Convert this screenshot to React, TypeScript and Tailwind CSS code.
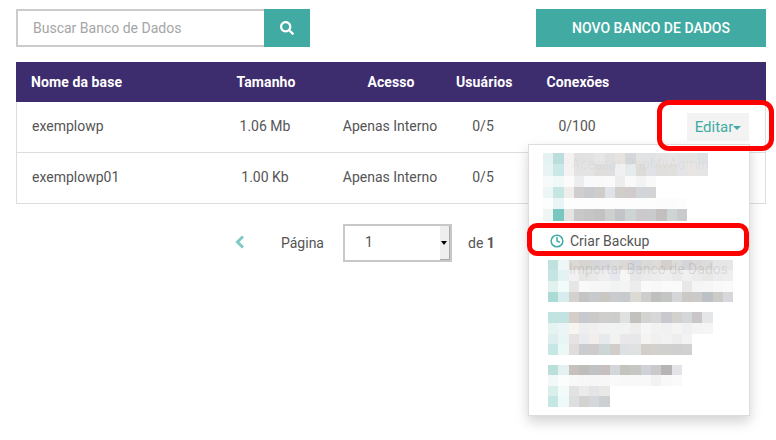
import { Clock } from "lucide-react";
import { FaSearch } from "react-icons/fa";

// the blurred menu entries of the screenshot, as rows of colour cells
const block1 = [
    ["#e4f2f1", "#b9dedb", "#f3f2f0", "#e1e1e1", "#e2e2e2", "#e6e6e6", "#e0e0e0", "#e6e3e1", "#d4d8da", "#e3e3e3", "#e0e2e4", "#e4e4e4", "#e6e4e4", "#e2e4e6", "#e4e4e2", "#dfe2e4"],
    ["#e8f4f4", "#cbe7e8", "#f4f3f1", "#e3e3e3", "#e3e3e3", "#dfdedc", "#dcdee0", "#f0f0f0", "#e6ebec", "#dedbd9", "#e0e2e5", "#e0dfdd", "#e2e0dd", "#e2e4e7", "#e8e5e2", "#e3e5e7"],
    ["#f7fafa", "#f0f8f8", "#fbfbf9", "#eceeee", "#f8f9fb", "#f9f9f9", "#fafafa", "#ededed", "#f9f9f9", "#f2f4f4", "#f9f9f9"],
    ["#eef6f5", "#c6e6e4", "#efeeec", "#d0cece", "#c9cad0", "#cfcdcb", "#dfe2e9", "#d1cecc", "#cfcccb", "#d2d5da", "#d4d4d6"],
    ["#fcfdfd", "#e8f4f5", "#fdfdfd", "#fdfdfd", "#fdfdfd", "#fdfdfd", "#fdfdfd", "#fdfdfd", "#fdfdfd", "#fdfdfd", "#fdfdfd", "#fcfcfc", "#fcfcfc", "#fdfdfd"],
    ["#eef5f3", "#78c7c1", "#e4e4e2", "#c8c8c8", "#c5c5c5", "#c2c2c2", "#ccd0ce", "#c2c4c8", "#ced4d4", "#cbc9c9", "#c9cbcd", "#c4bfbf", "#ced4d4", "#c8cacb"]
];

const block2 = [
    ["#bfe2de", "#eef6f6", "#ddd9d5", "#d8d4d0", "#d6d6d6", "#d9d9dd", "#dcdcdc", "#dcd9d7", "#d3d5dc", "#dadad8", "#dedcd9", "#d6d0cc", "#dcdcda", "#d3d5da", "#dcd8d8", "#dcdcdc", "#e6e6e6", "#e6e6e6"],
    ["#c5e5e2", "#e3f3f4", "#f1f1f1", "#e6e6e4", "#e8eaea", "#eeeeee", "#e6e8ee", "#f6f6f4", "#e6e6e8", "#eaeaea", "#ececec", "#eeeeee", "#eaeaea", "#f0f0f0", "#ebebeb", "#e8e8e6", "#ececf0", "#eeeeee"],
    ["#e1f1ee", "#f3fafa", "#e6e6e6", "#f9f9f9", "#f7f7f7", "#f6f6f6", "#f2f4f4", "#f4f4f4", "#ececec", "#fafafa", "#f8f8f8", "#fafafa", "#fafafa", "#e8e8e8", "#f5f5f5", "#f6f6f6", "#f9f9f9", "#fafafa"],
    ["#acdad5", "#d6ecee", "#d4d0ce", "#c6c4c2", "#c6cacc", "#cac6c2", "#c8ccce", "#c6cacd", "#dcd9d5", "#cdcdcb", "#bfbfbf", "#c4c6c4", "#d4d6da", "#ccc8c6", "#cccac8", "#bcc1c5", "#cdcbc8", "#d6d8dc"]
];

const block3 = [
    ["#c0e4e0", "#c2e3df", "#d6cdc9", "#c6cace", "#ccc9c9", "#cececc", "#cdcecc", "#dfe1e0", "#c2c1bd", "#d3d3d1", "#d8d6d6", "#c8c8ce", "#d3d1cd", "#d3d7da", "#c8c6c6", "#e4e6e8"],
    ["#e6f4f1", "#ecf5f6", "#f8f5f1", "#eeeeee", "#f0f0f0", "#f1f3f3", "#f1f3f3", "#f2f2f2", "#f0eeec", "#f5f7f6", "#f2f2f2", "#f1f1f3", "#f4f4f2", "#eff0f2", "#f4f4f4", "#f5f5f5"],
    ["#dcefee", "#e8f5f4", "#e7e3e3", "#e9ebee", "#f1eeec", "#e6eaec", "#f2f2f0", "#e9e7e7", "#e6e8e9", "#f6f4f2", "#f0f0ee", "#f2f2f2", "#eeeeee", "#f3f3f3"],
    ["#c6e8e4", "#ecf8f6", "#e0dcdc", "#cbccd0", "#cfcacb", "#ccd6d6", "#d1cdc9", "#dde1e4", "#e0e2e2", "#d2cec9", "#d3d1cd", "#d0d0ce", "#cfcfcf", "#d1d1d1"]
];

const block4 = [
    ["#b9e0db", "#e3f2f1", "#c6c1bd", "#bfbdb9", "#c0c2c6", "#c6c0c0", "#d3d7da", "#c4c4bc", "#c6c6c2", "#ced2d6", "#cbc9c9", "#b6b4b4", "#e4e4e8"],
    ["#f2f8f8", "#fbfdfd", "#f8f8f8", "#f7f7f7", "#f6f6f6", "#f7f7f7", "#f9f9f9", "#f8f8f8", "#f8f8f8", "#f8f8f8", "#f2f2f2", "#f8f8f8", "#fafafa"],
    ["#d9efec", "#f3fbfa", "#e2e2e2", "#ebebeb", "#e2e4e8", "#e8e8e6"],
    ["#c5e7e3", "#eefafa", "#dedede", "#d2d2d0", "#d4d8da", "#ccd0d2"]
];

// second row's conexões sits under the open menu, so it is left empty
const rows = [
    { name: "exemplowp", size: "1.06 Mb", access: "Apenas Interno", users: "0/5", conns: "0/100" },
    { name: "exemplowp01", size: "1.00 Kb", access: "Apenas Interno", users: "0/5", conns: "" }
];

function Mosaic({ cells, rowClass, className }: { cells: string[][]; rowClass: string; className: string }) {
    return (
        <div className={className}>
            {cells.map((row, i) => (
                <div key={i} className={`flex ${rowClass}`}>
                    {row.map((color, j) => (
                        <div key={j} className="w-[10.3px]" style={{ backgroundColor: color }} />
                    ))}
                </div>
            ))}
        </div>
    );
}

function Dropdown() {
    return (
        <div className="absolute left-[528px] top-[144px] z-10 flex h-[272px] w-[222px] flex-col border border-[#ddd] bg-white pt-[8px] shadow-[0_6px_12px_rgba(0,0,0,0.175)]">
            <div className="relative">
                <Mosaic cells={block1} rowClass="h-[11.25px]" className="ml-[14px]" />
                <span className="absolute left-[42px] top-[1px] text-[14px] text-black/[0.04]">Acessar PhpMyAdmin</span>
            </div>
            <div className="flex h-[39px] items-center pl-[21px] pt-[2px] text-[14px] text-[#555]">
                <Clock size={14} strokeWidth={2.6} className="mr-[6px] text-[#41aba3]" />
                Criar Backup
            </div>
            <div className="relative">
                <Mosaic cells={block2} rowClass="h-[10.7px]" className="ml-[19px]" />
                <span className="absolute left-[40px] top-[-1px] text-[14px] text-black/10">Importar Banco de Dados</span>
            </div>
            <Mosaic cells={block3} rowClass="h-[10.7px]" className="ml-[19px] mt-[10px]" />
            <Mosaic cells={block4} rowClass="h-[10.4px]" className="ml-[19px] mt-[10px]" />
        </div>
    );
}

export default function App() {
    return (
        <div className="relative h-[440px] w-[776px] overflow-hidden bg-white px-[16px] pt-[9px] font-['Roboto',sans-serif] text-[14px] text-[#555]">
            <div className="flex w-[750px] justify-between">
                <div className="flex h-[38px] w-[294px]">
                    <div className="flex flex-1 items-center border-2 border-r-0 border-[#ccc] pl-[15px] text-[14px] text-[#a5a5a5]">
                        Buscar Banco de Dados
                    </div>
                    <div className="flex w-[46px] items-center justify-center bg-[#41aba3] text-white">
                        <FaSearch className="text-[14px]" />
                    </div>
                </div>
                <div className="flex h-[38px] w-[230px] items-center justify-center bg-[#41aba3] text-[14px] font-medium text-white">
                    NOVO BANCO DE DADOS
                </div>
            </div>

            <div className="mt-[15px] w-[750px]">
                <div className="grid h-[40px] grid-cols-[190px_120px_130px_56px_132px_122px] items-center bg-[#3d2c6e] text-center font-bold tracking-[0.1px] text-white">
                    <div className="pl-[15px] text-left">Nome da base</div>
                    <div>Tamanho</div>
                    <div>Acesso</div>
                    <div>Usuários</div>
                    <div>Conexões</div>
                    <div />
                </div>
                {rows.map((row) => (
                    <div
                        key={row.name}
                        className="grid h-[51px] grid-cols-[188px_120px_130px_56px_132px_122px] items-center border-x border-b border-[#ddd] pb-[2px] text-center"
                    >
                        <div className="pl-[15px] text-left">{row.name}</div>
                        <div>{row.size}</div>
                        <div>{row.access}</div>
                        <div>{row.users}</div>
                        <div>{row.conns}</div>
                        <div className="mt-[2px] flex justify-end pr-[16px]">
                            {row.name == "exemplowp" && (
                                <div className="flex h-[28px] w-[62px] items-center justify-center bg-[#f3f3f3] text-[15px] text-[#41aba3]">
                                    Editar
                                    <span className="mt-[2px] border-x-[4px] border-t-[4px] border-x-transparent border-t-[#41aba3]" />
                                </div>
                            )}
                        </div>
                    </div>
                ))}
            </div>

            <div className="mt-[20px] flex h-[38px] items-center">
                <svg width="10" height="14" viewBox="0 0 10 14" className="ml-[219px] mb-[3px] text-[#7fcac4]">
                    <path d="M8 1.5 L2.5 7 L8 12.5" fill="none" stroke="currentColor" strokeWidth="3" />
                </svg>
                <span className="ml-[36px]">Página</span>
                <div className="ml-[19px] flex h-[38px] w-[109px] border-2 border-[#c8c8c8] pl-[20px]">
                    <span className="flex-1 self-center pb-[2px]">1</span>
                    <div className="flex w-[10px] items-center justify-center border-r border-b border-[#aaa] bg-[#eeeeee]">
                        <span className="border-x-[3px] border-t-[4px] border-x-transparent border-t-black" />
                    </div>
                </div>
                <span className="ml-[16px]">
                    de <b className="font-bold">1</b>
                </span>
            </div>

            <Dropdown />
            <div className="absolute left-[657px] top-[100px] z-20 h-[51px] w-[117px] rounded-[12px] border-[5px] border-[#fe0000]" />
            <div className="absolute left-[527px] top-[223px] z-20 h-[33px] w-[222px] rounded-[10px] border-[5px] border-[#fe0000]" />
        </div>
    );
}
